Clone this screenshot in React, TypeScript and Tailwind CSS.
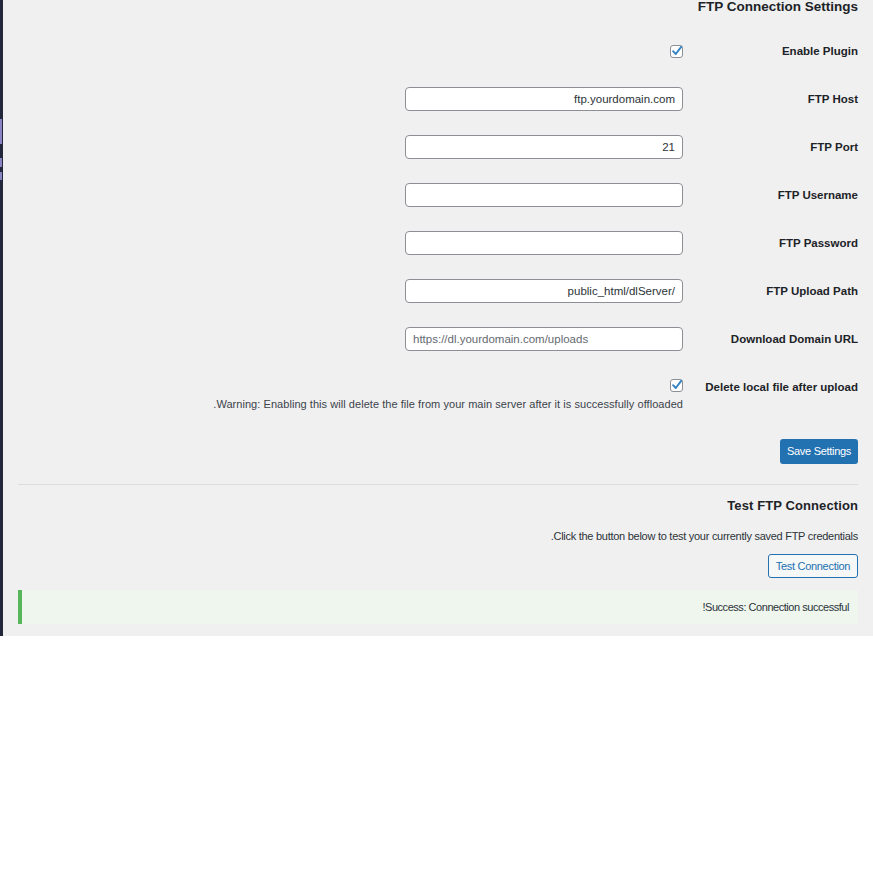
import React from "react";

const font = { fontFamily: '"Liberation Sans", Arial, sans-serif' };

function Check({ className = "" }: { className?: string }) {
  return (
    <span
      className={`relative flex h-[13px] w-[13px] shrink-0 rounded-[3px] border border-[#8c8f94] bg-white ${className}`}
    >
      <svg viewBox="0 0 16 16" className="absolute left-[-1px] top-[-2px] h-[14px] w-[14px]">
        <path d="M3.5 8.2 L6.6 11.4 L12.8 3.2" fill="none" stroke="#3582c4" strokeWidth="2.2" strokeLinecap="round" strokeLinejoin="round" />
      </svg>
    </span>
  );
}

function Label({ children }: { children: React.ReactNode }) {
  return <div className="text-[11.5px] font-bold leading-[14px] text-[#1d2327]">{children}</div>;
}

function Field({ value, placeholder, ltr }: { value?: string; placeholder?: string; ltr?: boolean }) {
  return (
    <div
      dir={ltr ? "ltr" : "rtl"}
      className="flex h-[24px] w-[278px] items-center rounded-[4px] border border-[#8c8f94] bg-white px-[7px] text-[11.5px] leading-[14px]"
    >
      {value ? (
        <span dir="ltr" className="text-[#2c3338]">{value}</span>
      ) : placeholder ? (
        <span className="text-[#646970]">{placeholder}</span>
      ) : null}
    </div>
  );
}

const rows: { label: string; value?: string; placeholder?: string; ltr?: boolean }[] = [
  { label: "FTP Host", value: "ftp.yourdomain.com" },
  { label: "FTP Port", value: "21" },
  { label: "FTP Username" },
  { label: "FTP Password" },
  { label: "FTP Upload Path", value: "public_html/dlServer/" },
  { label: "Download Domain URL", placeholder: "https://dl.yourdomain.com/uploads", ltr: true },
];

export default function App() {
  return (
    <div className="flex h-[873px] w-[873px] items-start bg-white" style={font}>
      {/* admin menu edge */}
      <div className="flex h-[636px] w-[3px] flex-col bg-[#22283a]">
        <div className="mt-[119px] h-[25px] w-[2px] bg-[#8a84c4]" />
        <div className="mt-[14px] h-[9px] w-[2px] bg-[#8a84c4]" />
        <div className="mt-[5px] h-[8px] w-[2px] bg-[#8a84c4]" />
      </div>

      <div dir="rtl" className="flex h-[636px] flex-1 flex-col bg-[#f0f0f1] px-[15px] text-[#1d2327]">
        <h1 className="mt-[-1px] h-[28px] text-[13.5px] font-bold leading-[16px]">FTP Connection Settings</h1>

        <div className="grid grid-cols-[175px_1fr]">
          <div className="flex h-12 items-center">
            <Label>Enable Plugin</Label>
          </div>
          <div className="flex h-12 items-center">
            <Check />
          </div>

          {rows.map((r) => (
            <React.Fragment key={r.label}>
              <div className="flex h-12 items-center">
                <Label>{r.label}</Label>
              </div>
              <div className="flex h-12 items-center">
                <Field value={r.value} placeholder={r.placeholder} ltr={r.ltr} />
              </div>
            </React.Fragment>
          ))}

          <div className="pt-[17px]">
            <Label>Delete local file after upload</Label>
          </div>
          <div className="flex flex-col items-start pt-[16px]">
            <Check />
            <p className="mt-[5px] text-[11px] leading-[14px] tracking-[0.05px] text-[#3c434a]">
              Warning: Enabling this will delete the file from your main server after it is successfully offloaded.
            </p>
          </div>
        </div>

        <div className="mt-[28px] flex">
          <button className="h-[25px] w-[78px] rounded-[3px] bg-[#2271b1] text-[11px] tracking-[-0.3px] text-white">
            Save Settings
          </button>
        </div>

        <div className="mt-[20px] h-px bg-[#dcdcde]" />

        <h2 className="mt-[13px] text-[13px] font-bold leading-[16px] tracking-[0.1px]">Test FTP Connection</h2>
        <p className="mt-[15px] text-[11px] leading-[14px] tracking-[-0.27px] text-[#2c3338]">
          Click the button below to test your currently saved FTP credentials.
        </p>
        <div className="mt-[11px] flex">
          <button className="h-[24px] w-[90px] rounded-[3px] border border-[#2271b1] bg-[#f6f7f7] text-[11px] tracking-[-0.3px] text-[#2271b1]">
            Test Connection
          </button>
        </div>

        <div dir="ltr" className="mt-[12px] flex h-[34px] items-center justify-end border-l-[4px] border-[#56b65a] bg-[#eef6ee] pr-[9px]">
          <p dir="rtl" className="text-[11px] leading-[14px] tracking-[-0.46px] text-[#2c3338]">
            Success: Connection successful!
          </p>
        </div>
      </div>
    </div>
  );
}
